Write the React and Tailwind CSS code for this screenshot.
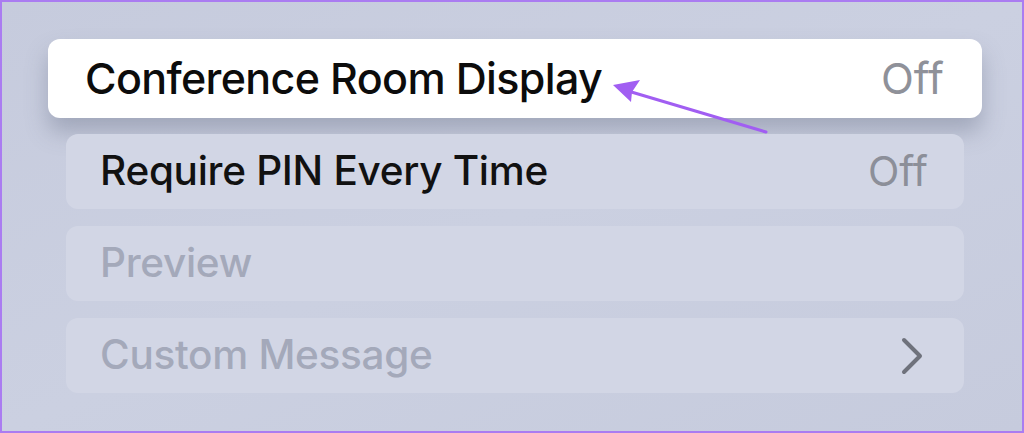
function SettingRow({ label, value, dimmed, chevron }) {
    return <div className="flex items-center justify-between w-[898px] h-[75px] ml-[64px] pl-[34px] pr-[36px] rounded-[12px] bg-[#d2d6e5]">
        <span className={`text-[40.5px] font-[450] tracking-[-0.3px] ${dimmed ? "text-[#a4a9ba]" : "text-[#111]"}`}>{label}</span>
        {value && <span className="text-[41px] text-[#8c8f99]">{value}</span>}
        {chevron && <svg width="24" height="40" viewBox="0 0 24 40" className="mr-[4px]">
            <path d="M4 4 L20 20 L4 36" fill="none" stroke="#6f727c" strokeWidth="4" strokeLinecap="round" strokeLinejoin="round" />
        </svg>}
    </div>
}

export default function App() {
    return <div className="relative w-[1024px] h-[433px] overflow-hidden border-2 border-[#aa7cf1] bg-gradient-to-br from-[#c6cbdd] via-[#cbd0e1] to-[#c6cbdd] font-['Inter',sans-serif]">
        <div className="flex flex-col pt-[37px]">
            {/* focused row */}
            <div className="flex items-center justify-between w-[934px] h-[79px] ml-[46px] pl-[37px] pr-[38px] rounded-[12px] bg-white shadow-[0_14px_22px_rgba(90,96,120,0.35)]">
                <span className="text-[43px] font-[450] tracking-[-0.65px] text-[#0c0c0c]">Conference Room Display</span>
                <span className="text-[43px] text-[#8f9199]">Off</span>
            </div>
            <div className="flex flex-col gap-[17px] mt-[16px]">
                <SettingRow label="Require PIN Every Time" value="Off" />
                <SettingRow label="Preview" dimmed />
                <SettingRow label="Custom Message" dimmed chevron />
            </div>
        </div>

        {/* annotation arrow */}
        <svg className="absolute left-0 top-0" width="1024" height="433" viewBox="0 0 1024 433">
            <line x1="764" y1="130" x2="626" y2="89" stroke="#a15ef2" strokeWidth="3" strokeLinecap="round" />
            <path d="M611 83 L638 78 L630 90 L629 100 Z" fill="#a15ef2" />
        </svg>
    </div>
}
